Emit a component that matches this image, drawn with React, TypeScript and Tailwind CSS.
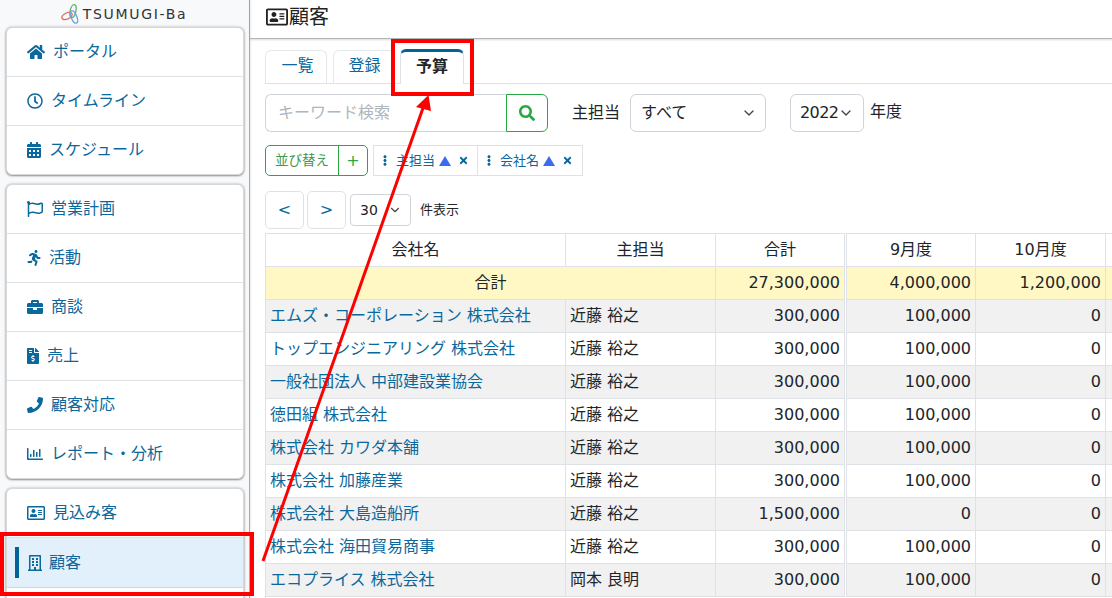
import React from "react";
import { FaHome, FaRegClock, FaCalendarAlt, FaRegFlag, FaRunning, FaBriefcase, FaFileInvoiceDollar, FaPhone, FaRegChartBar, FaRegAddressCard, FaRegBuilding, FaSearch, FaTimes, FaEllipsisV } from "react-icons/fa";
import { LuChevronDown } from "react-icons/lu";

type Item = { label: string; icon: React.ReactNode; text: string; active?: boolean };
const g1: Item[] = [
  { label: "ポータル", icon: <FaHome className="w-[18px] h-[16px]" />, text: "ml-[8px]" },
  { label: "タイムライン", icon: <FaRegClock className="w-[16px] h-[16px]" />, text: "ml-[8px]" },
  { label: "スケジュール", icon: <FaCalendarAlt className="w-[14px] h-[16px]" />, text: "ml-[8px]" },
];
const g2: Item[] = [
  { label: "営業計画", icon: <FaRegFlag className="w-[16px] h-[16px]" />, text: "ml-[8px]" },
  { label: "活動", icon: <FaRunning className="w-[14px] h-[16px]" />, text: "ml-[8px]" },
  { label: "商談", icon: <FaBriefcase className="w-[16px] h-[16px]" />, text: "ml-[8px]" },
  { label: "売上", icon: <FaFileInvoiceDollar className="w-[12px] h-[16px]" />, text: "ml-[8px]" },
  { label: "顧客対応", icon: <FaPhone className="w-[16px] h-[16px]" />, text: "ml-[8px]" },
  { label: "レポート・分析", icon: <FaRegChartBar className="w-[16px] h-[16px]" />, text: "ml-[8px]" },
];

const rows = [
  ["エムズ・コーポレーション 株式会社", "近藤 裕之", "300,000", "100,000", "0"],
  ["トップエンジニアリング 株式会社", "近藤 裕之", "300,000", "100,000", "0"],
  ["一般社団法人 中部建設業協会", "近藤 裕之", "300,000", "100,000", "0"],
  ["徳田組 株式会社", "近藤 裕之", "300,000", "100,000", "0"],
  ["株式会社 カワダ本舗", "近藤 裕之", "300,000", "100,000", "0"],
  ["株式会社 加藤産業", "近藤 裕之", "300,000", "100,000", "0"],
  ["株式会社 大島造船所", "近藤 裕之", "1,500,000", "0", "0"],
  ["株式会社 海田貿易商事", "近藤 裕之", "300,000", "100,000", "0"],
  ["エコプライス 株式会社", "岡本 良明", "300,000", "100,000", "0"],
];

function NavRow({ item }: { item: Item }) {
  return (
    <div className="h-[49px] last:h-[48px] flex items-center pl-[20px] border-b border-[#dee2e6] last:border-b-0 text-[#0b689c]">
      {item.icon}
      <span className={item.text}>{item.label}</span>
    </div>
  );
}

const cell = "h-[33px] p-0 px-[4px] border border-[#dee2e6] whitespace-nowrap overflow-hidden";
const card = "bg-white rounded-[6px] border border-[#d8d8d8] shadow-[0_0_3px_rgba(0,0,0,0.25),0_1px_2px_rgba(0,0,0,0.35)]";

function SortChip({ label }: { label: string }) {
  return (
    <div className="w-[105px] last:w-[106px] h-[31px] border border-[#dee2e6] -ml-px first:ml-0 flex items-center text-[13px] text-[#0b689c] pl-[7px]">
      <FaEllipsisV className="w-[8px] h-[11px]" />
      <span className="ml-[7px]">{label}</span>
      <svg viewBox="0 0 12 10" className="w-[12px] h-[10px] ml-[4px]"><polygon points="6,0 12,10 0,10" fill="#3b6cf0" /></svg>
      <FaTimes className="w-[11px] h-[11px] ml-[7px]" />
    </div>
  );
}

export default function App() {
  return (
    <div className="w-[1112px] h-[598px] overflow-hidden relative flex bg-white text-[16px] text-[#212529] font-['DejaVu_Sans','Noto_Sans_CJK_JP',sans-serif]">
      <aside className="w-[250px] shrink-0 h-full bg-[#f8f9fa] border-r border-[#a8a8a8] ml-0 pl-[6px] pr-[5px] shadow-[1px_0_2px_rgba(0,0,0,0.08)]">
        <div className="h-[27px] flex items-center justify-center pr-[2px]">
          <svg viewBox="0 0 20 20" className="w-[20px] h-[20px]" fill="none" strokeWidth="1.3">
            <ellipse cx="6" cy="12" rx="5.5" ry="3" stroke="#e2685a" transform="rotate(-25 6 12)" />
            <ellipse cx="12" cy="7" rx="2.8" ry="6.5" stroke="#5fb36a" transform="rotate(12 12 7)" />
            <ellipse cx="13" cy="13" rx="2.8" ry="6.5" stroke="#6a9ee8" transform="rotate(-22 13 13)" />
          </svg>
          <span className="ml-[2px] text-[14px] leading-none tracking-[1.7px] text-[#333]">TSUMUGI-Ba</span>
        </div>
        <div className="flex flex-col gap-[9px]">
          <div className={card}>
            {g1.map((i) => <NavRow key={i.label} item={i} />)}
          </div>
          <div className={card}>
            {g2.map((i) => <NavRow key={i.label} item={i} />)}
          </div>
          <div className={`${card} h-[200px]`}>
            <div className="h-[49px] flex items-center pl-[20px] border-b border-[#dee2e6] text-[#0b689c]">
              <FaRegAddressCard className="w-[18px] h-[16px]" />
              <span className="ml-[8px]">見込み客</span>
            </div>
            <div className="h-[50px] flex items-center pl-[8px] bg-[#e2f0fb] border-b border-[#c8d8e6] text-[#0b689c]">
              <div className="w-[4px] h-[31px] bg-[#00639a]" />
              <FaRegBuilding className="w-[14px] h-[16px] ml-[9px]" />
              <span className="ml-[7px]">顧客</span>
            </div>
          </div>
        </div>
      </aside>

      <main className="flex-1 min-w-0">
        <header className="h-[39px] border-b border-[#b5b5b5] shadow-[0_1px_2px_rgba(0,0,0,0.15)] flex items-center pl-[16px] pb-[4px] text-[#222]">
          <FaRegAddressCard className="w-[22px] h-[20px]" />
          <span className="ml-[1px] text-[20px]">顧客</span>
        </header>

        <div className="pl-[15px]">
          <div className="mt-[11px] h-[34px] flex items-end border-b border-[#dee2e6]">
            <div className="w-[62px] h-[33px] pb-[2px] pl-[3px] border border-b-0 border-[#e4e7ea] rounded-t-[6px] flex items-center justify-center text-[#0b689c]">一覧</div>
            <div className="w-[61px] h-[33px] pb-[2px] pl-[2px] ml-[6px] border border-b-0 border-[#e4e7ea] rounded-t-[6px] flex items-center justify-center text-[#0b689c]">登録</div>
            <div className="w-[64px] h-[35px] pb-[2px] ml-[6px] border border-b-0 border-t-[3px] border-[#dee2e6] border-t-[#00639a] rounded-t-[6px] bg-white flex items-center justify-center font-bold -mb-px">予算</div>
          </div>

          <div className="mt-[10px] flex items-center h-[38px]">
            <div className="w-[241px] h-[38px] border border-[#ced4da] border-r-0 rounded-l-[6px] flex items-center pl-[12px] text-[#adb5bd]">キーワード検索</div>
            <div className="w-[42px] h-[38px] border border-[#28a745] rounded-r-[6px] flex items-center justify-center text-[#28a745]">
              <FaSearch className="w-[16px] h-[16px]" />
            </div>
            <span className="ml-[24px]">主担当</span>
            <div className="ml-[10px] w-[136px] h-[38px] border border-[#ced4da] rounded-[6px] flex items-center justify-between pl-[10px] pr-[8px]">
              <span>すべて</span>
              <LuChevronDown className="w-[16px] h-[16px] text-[#444]" />
            </div>
            <div className="ml-[24px] w-[74px] h-[38px] border border-[#ced4da] rounded-[6px] flex items-center pl-[9px]">
              <span className="tracking-[-0.6px]">2022</span>
              <LuChevronDown className="w-[16px] h-[16px] text-[#444]" />
            </div>
            <span className="ml-[6px] -mt-[3px]">年度</span>
          </div>

          <div className="mt-[13px] flex items-center h-[31px]">
            <div className="w-[74px] h-[31px] border border-[#28a745] rounded-l-[5px] flex items-center justify-center text-[#3c9a50] text-[13.5px]">並び替え</div>
            <div className="w-[30px] h-[31px] -ml-px border border-[#28a745] rounded-r-[5px] flex items-center justify-center text-[#28a745]">+</div>
            <div className="ml-[5px] flex">
              <SortChip label="主担当" />
              <SortChip label="会社名" />
            </div>
          </div>

          <div className="mt-[15px] flex items-center h-[38px]">
            <div className="w-[39px] h-[38px] border border-[#dee2e6] rounded-[5px] flex items-center justify-center text-[#0b689c]">&lt;</div>
            <div className="ml-[3px] w-[39px] h-[38px] border border-[#dee2e6] rounded-[5px] flex items-center justify-center text-[#0b689c]">&gt;</div>
            <div className="ml-[4px] w-[61px] h-[32px] border border-[#ced4da] rounded-[4px] flex items-center pl-[9px] text-[14px]">
              <span>30</span>
              <LuChevronDown className="w-[14px] h-[14px] ml-[10px] text-[#444]" />
            </div>
            <span className="ml-[9px] text-[13px]">件表示</span>
          </div>

          <table className="mt-[4px] table-fixed border-collapse w-[860px]">
            <colgroup>
              <col className="w-[300px]" />
              <col className="w-[150px]" />
              <col className="w-[130px]" />
              <col className="w-[130px]" />
              <col className="w-[130px]" />
              <col className="w-[20px]" />
            </colgroup>
            <tbody>
              <tr>
                <td className={`${cell} text-center`}>会社名</td>
                <td className={`${cell} text-center`}>主担当</td>
                <td className={`${cell} text-center border-r-[3px] border-r-[#dee2e6] border-double`}>合計</td>
                <td className={`${cell} text-center`}>9月度</td>
                <td className={`${cell} text-center`}>10月度</td>
                <td className={cell}></td>
              </tr>
              <tr className="bg-[#fff8c5]">
                <td className={`${cell} text-center`} colSpan={2}>合計</td>
                <td className={`${cell} text-right border-r-[3px] border-r-[#dee2e6] border-double`}>27,300,000</td>
                <td className={`${cell} text-right`}>4,000,000</td>
                <td className={`${cell} text-right`}>1,200,000</td>
                <td className={cell}></td>
              </tr>
              {rows.map((r, i) => (
                <tr key={r[0]} className={i % 2 === 0 ? "bg-[#f1f1f1]" : "bg-white"}>
                  <td className={`${cell} text-[#0b689c]`}>{r[0]}</td>
                  <td className={cell}>{r[1]}</td>
                  <td className={`${cell} text-right border-r-[3px] border-r-[#dee2e6] border-double`}>{r[2]}</td>
                  <td className={`${cell} text-right`}>{r[3]}</td>
                  <td className={`${cell} text-right`}>{r[4]}</td>
                  <td className={cell}></td>
                </tr>
              ))}
              <tr>
                <td className={cell} colSpan={6}></td>
              </tr>
            </tbody>
          </table>
        </div>
      </main>

      <div className="absolute left-[391px] top-[39px] w-[83px] h-[57px] border-[4px] border-[#fe0000] pointer-events-none" />
      <div className="absolute left-0 top-[532px] w-[254px] h-[64px] border-[4px] border-[#fe0000] pointer-events-none" />
      <svg className="absolute left-0 top-0 w-[1112px] h-[598px] pointer-events-none" viewBox="0 0 1112 598" fill="none">
        <line x1="263" y1="561" x2="423" y2="108" stroke="#fe0000" strokeWidth="3" />
        <polygon points="428.5,95 416,107 431,111" fill="#fe0000" />
      </svg>
    </div>
  );
}
